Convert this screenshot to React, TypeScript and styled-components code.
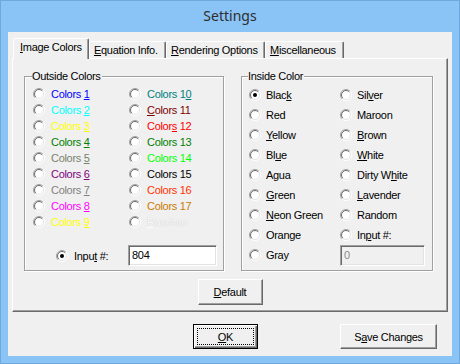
import React from "react"
import styled, { createGlobalStyle, css } from "styled-components"

const GlobalStyle = createGlobalStyle`
  html, body {
    margin: 0;
    padding: 0;
    background: #8ac3f5;
  }
  body {
    font-family: "Liberation Sans", Arial, sans-serif;
    font-size: 11px;
    letter-spacing: -0.3px;
    color: #000;
  }
`

const Window = styled.div`
  box-sizing: border-box;
  width: 460px;
  height: 364px;
  background: #8ac3f5;
  border: 1px solid #6ea8dc;
  padding: 0 7px 7px 7px;
  display: flex;
  flex-direction: column;
`

const TitleBar = styled.div`
  height: 31px;
  line-height: 29px;
  text-align: center;
  font-family: "Noto Sans", "Open Sans", sans-serif;
  font-size: 14px;
  letter-spacing: 0;
  color: #2e2e2e;
`

const Client = styled.div`
  box-sizing: border-box;
  width: 444px;
  height: 324px;
  background: #f0f0f0;
  padding: 6px 4px 0 4px;
  display: flex;
  flex-direction: column;
`

const TabControl = styled.div`
  width: 436px;
  display: flex;
  flex-direction: column;
`

const TabStrip = styled.div`
  height: 20px;
  display: flex;
  align-items: flex-end;
  padding-left: 1px;
`

const Tab = styled.div<{ $w: number; $active?: boolean }>`
  box-sizing: border-box;
  width: ${(p) => p.$w}px;
  height: 17px;
  border-top: 1px solid #fff;
  border-left: 1px solid #fff;
  border-right: 1px solid #696969;
  box-shadow: inset -1px 0 0 #a0a0a0;
  border-radius: 2px 2px 0 0;
  padding: 2px 0 0 4px;
  white-space: nowrap;
  ${(p) =>
    p.$active &&
    css`
      height: 21px;
      margin-bottom: -1px;
      padding: 2px 0 0 6px;
      background: #f0f0f0;
      position: relative;
      z-index: 1;
    `}
`

const Page = styled.div`
  box-sizing: border-box;
  height: 254px;
  border-top: 1px solid #fff;
  border-left: 1px solid #fff;
  border-right: 1px solid #696969;
  border-bottom: 1px solid #696969;
  box-shadow: inset -1px -1px 0 #a0a0a0;
  padding: 17px 0 0 11px;
  display: flex;
  flex-direction: column;
`

const GroupRow = styled.div`
  display: flex;
  gap: 17px;
`

const Group = styled.div<{ $w: number; $padLeft: number; $padTop: number }>`
  box-sizing: border-box;
  position: relative;
  width: ${(p) => p.$w}px;
  height: 195px;
  border: 1px solid #a0a0a0;
  box-shadow: 1px 1px 0 #fff, inset 1px 1px 0 #fff;
  padding: ${(p) => p.$padTop}px 0 0 ${(p) => p.$padLeft}px;
`

const GroupCaption = styled.span<{ $left: number }>`
  position: absolute;
  top: -7px;
  left: ${(p) => p.$left}px;
  line-height: 13px;
  background: #f0f0f0;
  padding-right: 1px;
`

const OptionGrid = styled.div<{ $col: number; $row: number }>`
  display: grid;
  grid-template-columns: ${(p) => p.$col}px 1fr;
  grid-auto-rows: ${(p) => p.$row}px;
`

const Option = styled.div<{ $gap: number }>`
  display: flex;
  align-items: center;
  gap: ${(p) => p.$gap}px;
  white-space: nowrap;
`

const OptionText = styled.span<{ $color?: string; $disabled?: boolean }>`
  color: ${(p) => p.$color || "#000"};
  ${(p) =>
    p.$disabled &&
    css`
      color: #fbfbfb;
      text-shadow: 0 0 1px #b8b8b8;
    `}
`

const Key = styled.span`
  text-decoration: underline;
  text-underline-offset: 1px;
`

const InputRow = styled.div`
  display: flex;
  align-items: center;
  height: 21px;
  margin-top: 15px;
  padding-left: 23px;
`

const InputLabel = styled.span`
  width: 54px;
  margin-left: 6px;
`

const TextBox = styled.div<{ $w: number; $disabled?: boolean }>`
  box-sizing: border-box;
  width: ${(p) => p.$w}px;
  height: 21px;
  border-top: 1px solid #a0a0a0;
  border-left: 1px solid #a0a0a0;
  border-right: 1px solid #fff;
  border-bottom: 1px solid #fff;
  box-shadow: inset 1px 1px 0 #696969, inset -1px -1px 0 #e3e3e3;
  background: ${(p) => (p.$disabled ? "#f0f0f0" : "#fff")};
  color: ${(p) => (p.$disabled ? "#8a8a8a" : "#000")};
  padding: 3px 0 0 3px;
  line-height: 13px;
`

const ButtonBase = styled.div<{ $w: number; $h: number; $default?: boolean }>`
  box-sizing: border-box;
  width: ${(p) => p.$w}px;
  height: ${(p) => p.$h}px;
  display: flex;
  align-items: center;
  justify-content: center;
  background: #f0f0f0;
  border-top: 1px solid #fff;
  border-left: 1px solid #fff;
  border-right: 1px solid #696969;
  border-bottom: 1px solid #696969;
  box-shadow: inset -1px -1px 0 #a0a0a0;
  ${(p) =>
    p.$default &&
    css`
      border: 1px solid #000;
      box-shadow: inset 1px 1px 0 #fff, inset -1px -1px 0 #696969,
        inset -2px -2px 0 #a0a0a0;
      outline: 1px dotted #000;
      outline-offset: -5px;
    `}
`

const PageButtonRow = styled.div`
  display: flex;
  justify-content: center;
  margin-top: 8px;
  padding-right: 11px;
`

const Footer = styled.div`
  display: flex;
  justify-content: flex-end;
  gap: 82px;
  margin-top: 12px;
  padding-right: 11px;
`

const RadioGlyph: React.FC<{ checked?: boolean }> = ({ checked }) => {
  const arc = (r: number, from: "bl" | "tr") => {
    const d = r * Math.SQRT1_2
    const bl = `${6 - d} ${6 + d}`
    const tr = `${6 + d} ${6 - d}`
    return from === "bl"
      ? `M${bl} A${r} ${r} 0 0 1 ${tr}`
      : `M${tr} A${r} ${r} 0 0 1 ${bl}`
  }
  return (
    <svg width="12" height="12" viewBox="0 0 12 12" style={{ flex: "none" }}>
      <circle cx="6" cy="6" r="5" fill="#fff" />
      <path d={arc(5.5, "bl")} stroke="#a0a0a0" fill="none" />
      <path d={arc(5.5, "tr")} stroke="#fff" fill="none" />
      <path d={arc(4.5, "bl")} stroke="#696969" fill="none" />
      <path d={arc(4.5, "tr")} stroke="#e3e3e3" fill="none" />
      {checked && <circle cx="6" cy="6" r="2" fill="#000" />}
    </svg>
  )
}

const Label: React.FC<{ text: string; u?: number }> = ({ text, u = -1 }) => {
  if (u < 0) return <>{text}</>
  return (
    <>
      {text.slice(0, u)}
      <Key>{text[u]}</Key>
      {text.slice(u + 1)}
    </>
  )
}

type Item = { text: string; u?: number; color?: string; checked?: boolean; disabled?: boolean }

const outsideLeft: Item[] = [
  { text: "Colors 1", u: 7, color: "#0000ff" },
  { text: "Colors 2", u: 7, color: "#00ffff" },
  { text: "Colors 3", u: 7, color: "#ffff00" },
  { text: "Colors 4", u: 7, color: "#008000" },
  { text: "Colors 5", u: 7, color: "#7a806c" },
  { text: "Colors 6", u: 7, color: "#800080" },
  { text: "Colors 7", u: 7, color: "#808080" },
  { text: "Colors 8", u: 7, color: "#ff00ff" },
  { text: "Colors 9", u: 7, color: "#ffff00" },
]

const outsideRight: Item[] = [
  { text: "Colors 10", u: 8, color: "#008080" },
  { text: "Colors 11", u: 0, color: "#800000" },
  { text: "Colors 12", u: 5, color: "#ff0000" },
  { text: "Colors 13", color: "#008000" },
  { text: "Colors 14", color: "#00ff00" },
  { text: "Colors 15", color: "#000000" },
  { text: "Colors 16", color: "#ff3300" },
  { text: "Colors 17", color: "#cc7a00" },
  { text: "Random", u: 0, disabled: true },
]

const insideLeft: Item[] = [
  { text: "Black", u: 4, checked: true },
  { text: "Red" },
  { text: "Yellow", u: 0 },
  { text: "Blue", u: 2 },
  { text: "Agua" },
  { text: "Green", u: 0 },
  { text: "Neon Green", u: 0 },
  { text: "Orange" },
  { text: "Gray" },
]

const insideRight: Item[] = [
  { text: "Silver", u: 3 },
  { text: "Maroon" },
  { text: "Brown", u: 0 },
  { text: "White", u: 0 },
  { text: "Dirty White", u: 7 },
  { text: "Lavender", u: 0 },
  { text: "Random" },
  { text: "Input #:", u: 2 },
]

const tabs = [
  { text: "Image Colors", w: 76 },
  { text: "Equation Info.", w: 77 },
  { text: "Rendering Options", w: 99 },
  { text: "Miscellaneous", w: 79 },
]

const Radio: React.FC<{ item: Item; gap: number }> = ({ item, gap }) => (
  <Option $gap={gap}>
    <RadioGlyph checked={item.checked} />
    <OptionText $color={item.color} $disabled={item.disabled}>
      <Label text={item.text} u={item.u} />
    </OptionText>
  </Option>
)

const App: React.FC = () => {
  return (
    <>
      <GlobalStyle />
      <Window>
        <TitleBar>Settings</TitleBar>
        <Client>
          <TabControl>
            <TabStrip>
              {tabs.map((t, i) => (
                <Tab key={t.text} $w={t.w} $active={i === 0}>
                  <Label text={t.text} u={0} />
                </Tab>
              ))}
            </TabStrip>
            <Page>
              <GroupRow>
                <Group $w={200} $padLeft={8} $padTop={9}>
                  <GroupCaption $left={7}>Outside Colors</GroupCaption>
                  <OptionGrid $col={96} $row={16}>
                    {outsideLeft.map((item, i) => (
                      <React.Fragment key={item.text}>
                        <Radio item={item} gap={6} />
                        <Radio item={outsideRight[i]} gap={6} />
                      </React.Fragment>
                    ))}
                  </OptionGrid>
                  <InputRow>
                    <RadioGlyph checked />
                    <InputLabel>
                      <Label text="Input #:" u={4} />
                    </InputLabel>
                    <TextBox $w={89}>804</TextBox>
                  </InputRow>
                </Group>
                <Group $w={192} $padLeft={7} $padTop={8}>
                  <GroupCaption $left={6}>Inside Color</GroupCaption>
                  <OptionGrid $col={91} $row={20}>
                    {insideLeft.map((item, i) => (
                      <React.Fragment key={item.text}>
                        <Radio item={item} gap={5} />
                        {insideRight[i] ? (
                          <Radio item={insideRight[i]} gap={5} />
                        ) : (
                          <TextBox $w={85} $disabled>
                            0
                          </TextBox>
                        )}
                      </React.Fragment>
                    ))}
                  </OptionGrid>
                </Group>
              </GroupRow>
              <PageButtonRow>
                <ButtonBase $w={65} $h={26}>
                  <Label text="Default" u={0} />
                </ButtonBase>
              </PageButtonRow>
            </Page>
          </TabControl>
          <Footer>
            <ButtonBase $w={65} $h={25} $default>
              <Label text="OK" u={0} />
            </ButtonBase>
            <ButtonBase $w={97} $h={25}>
              <Label text="Save Changes" u={1} />
            </ButtonBase>
          </Footer>
        </Client>
      </Window>
    </>
  )
}

export default App
